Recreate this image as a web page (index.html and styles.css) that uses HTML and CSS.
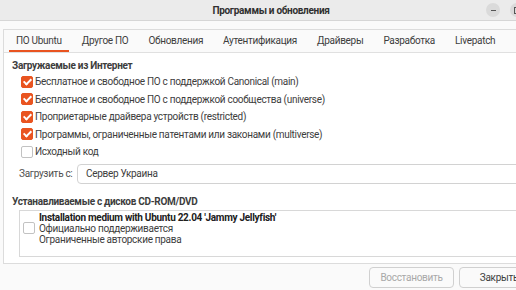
FILE: index.html
```html
<!DOCTYPE html>
<html lang="ru">
<head>
<meta charset="UTF-8" />
<title>Программы и обновления</title>
<link rel="stylesheet" href="styles.css">
</head>
<body>

<div class="window">
  <div class="titlebar">
    <span class="title">Программы и обновления</span>
    <div class="wm-buttons">
      <span class="wm-btn"><span class="dash"></span></span>
      <span class="wm-btn"><span class="square"></span></span>
      <span class="wm-btn"></span>
    </div>
  </div>

  <div class="content">
    <div class="notebook">
      <div class="tabs">
        <div class="tab active">ПО Ubuntu</div>
        <div class="tab">Другое ПО</div>
        <div class="tab">Обновления</div>
        <div class="tab">Аутентификация</div>
        <div class="tab">Драйверы</div>
        <div class="tab">Разработка</div>
        <div class="tab">Livepatch</div>
      </div>

      <div class="page">
        <div class="heading">Загружаемые из Интернет</div>
        <div class="checks">
          <label class="check"><span class="box on"></span>Бесплатное и свободное ПО с поддержкой Canonical (main)</label>
          <label class="check"><span class="box on"></span>Бесплатное и свободное ПО с поддержкой сообщества (universe)</label>
          <label class="check"><span class="box on"></span>Проприетарные драйвера устройств (restricted)</label>
          <label class="check"><span class="box on"></span>Программы, ограниченные патентами или законами (multiverse)</label>
          <label class="check"><span class="box"></span>Исходный код</label>
        </div>

        <div class="source-row">
          <span class="source-label">Загрузить с:</span>
          <div class="combo">Сервер Украина</div>
        </div>

        <div class="heading">Устанавливаемые с дисков CD-ROM/DVD</div>
        <div class="cdrom-list">
          <div class="cdrom-item">
            <span class="box"></span>
            <div class="cdrom-text">
              <div class="cdrom-name">Installation medium with Ubuntu 22.04 'Jammy Jellyfish'</div>
              <div>Официально поддерживается</div>
              <div>Ограниченные авторские права</div>
            </div>
          </div>
        </div>
      </div>
    </div>

    <div class="actions">
      <button class="btn" disabled>Восстановить</button>
      <button class="btn">Закрыть</button>
    </div>
  </div>
</div>

</body>
</html>
```

FILE: styles.css
```css
body {
  margin: 0;
  padding: 0;
  background: #fafafa;
  font-family: Roboto, "Noto Sans", sans-serif;
  font-size: 10px;
  letter-spacing: -0.3px;
  color: #3d3d3d;
  overflow: hidden;
  white-space: nowrap;
}
.window {
  width: 542px;
  height: 290px;
  background: #fafafa;
}
.titlebar {
  height: 20px;
  background: #ebebeb;
  border-bottom: 1px solid #d6d6d6;
  position: relative;
  display: flex;
  justify-content: center;
  align-items: center;
}
.title {
  font-weight: bold;
  color: #303030;
}
.wm-buttons {
  position: absolute;
  top: 3px;
  left: 486px;
  display: flex;
  gap: 10px;
}
.wm-btn {
  width: 14px;
  height: 14px;
  border-radius: 50%;
  background: #dadada;
  display: flex;
  align-items: center;
  justify-content: center;
}
.dash {
  width: 5px;
  height: 1px;
  background: #555;
  margin-top: 1px;
}
.square {
  width: 5px;
  height: 5px;
  border: 1px solid #555;
}
.content {
  padding: 8px 3px 0 3px;
}
.notebook {
  border: 1px solid #dcdcdc;
  background: #fff;
  height: 233px;
  display: flex;
  flex-direction: column;
}
.tabs {
  display: flex;
  height: 22px;
  padding-left: 5px;
  gap: 6px;
  border-bottom: 1px solid #e0e0e0;
  background: #fafafa;
}
.tab {
  flex: none;
  padding: 0 7px;
  line-height: 22px;
  color: #3d3d3d;
}
.tab.active {
  box-shadow: inset 0 -2px 0 #e95420;
}
.page {
  padding: 5px 8px 0 8px;
  flex: 1;
}
.heading {
  font-weight: bold;
  line-height: 15px;
}
.checks {
  padding-left: 9px;
}
.check {
  display: flex;
  align-items: center;
  height: 17.5px;
  gap: 2px;
}
.box {
  width: 10px;
  height: 10px;
  border: 1px solid #c2c2c2;
  border-radius: 2px;
  background: #fff;
  flex: none;
  position: relative;
}
.box.on {
  background: #e95420;
  border-color: #e95420;
}
.box.on::after {
  content: "";
  position: absolute;
  left: 3px;
  top: 0px;
  width: 3px;
  height: 6px;
  border: solid #fff;
  border-width: 0 2px 2px 0;
  transform: rotate(45deg);
}
.source-row {
  display: flex;
  align-items: center;
  gap: 8px;
  padding: 3px 0 0 7px;
  margin-bottom: 10px;
}
.source-label {
  width: 50px;
  color: #505050;
}
.combo {
  flex: 1;
  height: 18px;
  line-height: 18px;
  border: 1px solid #d2d2d2;
  border-radius: 4px;
  padding-left: 8px;
  background: #fff;
}
.cdrom-list {
  margin: 1px 0 0 7px;
  border: 1px solid #d8d8d8;
  height: 45px;
}
.cdrom-item {
  display: flex;
  align-items: center;
  gap: 4px;
  padding: 1px 0 0 3px;
  line-height: 11px;
}
.cdrom-name {
  font-weight: bold;
  color: #202020;
}
.actions {
  display: flex;
  justify-content: flex-end;
  gap: 5px;
  padding-top: 3px;
}
.btn {
  font-family: inherit;
  font-size: 10px;
  letter-spacing: -0.3px;
  height: 21px;
  border: 1px solid #d0d0d0;
  border-radius: 4px;
  background: #fafafa;
  color: #3d3d3d;
  padding: 0 10px;
}
.btn:disabled {
  color: #a8a8a8;
  width: 85px;
}
.btn:last-child {
  width: 80px;
}
```
